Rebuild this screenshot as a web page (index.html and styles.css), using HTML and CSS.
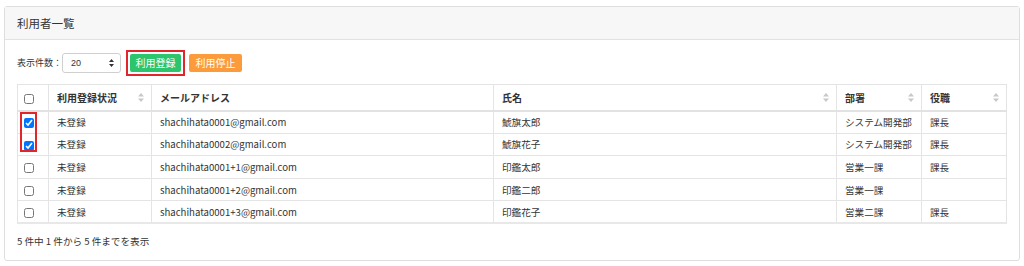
FILE: index.html
```html
<!DOCTYPE html>
<html lang="ja">
<head>
<meta charset="utf-8">
<title>利用者一覧</title>
<link rel="stylesheet" href="styles.css">
</head>
<body>
<div class="card">
  <div class="card-header">利用者一覧</div>
  <div class="card-body">
    <div class="toolbar">
      <label class="per-page">表示件数：</label>
      <div class="select">
        <span>20</span>
        <svg class="updown" width="5" height="8" viewBox="0 0 5 8"><path d="M2.5 0 L5 3 L0 3 Z M2.5 8 L5 5 L0 5 Z" fill="#333"/></svg>
      </div>
      <span class="mark-btn"><button class="btn btn-green">利用登録</button></span>
      <button class="btn btn-orange">利用停止</button>
    </div>
    <div class="table-wrap">
      <table class="grid">
        <colgroup>
          <col class="c-chk"><col class="c-status"><col class="c-mail"><col class="c-name"><col class="c-dept"><col class="c-role">
        </colgroup>
        <thead>
          <tr>
            <th class="chk"><input type="checkbox"></th>
            <th><div class="th-in"><span>利用登録状況</span><svg class="sort" width="6" height="9" viewBox="0 0 6 9"><path d="M3 0 L6 3.5 L0 3.5 Z M3 9 L6 5.5 L0 5.5 Z" fill="#c8c8c8"/></svg></div></th>
            <th><div class="th-in"><span>メールアドレス</span></div></th>
            <th><div class="th-in"><span>氏名</span><svg class="sort" width="6" height="9" viewBox="0 0 6 9"><path d="M3 0 L6 3.5 L0 3.5 Z M3 9 L6 5.5 L0 5.5 Z" fill="#c8c8c8"/></svg></div></th>
            <th><div class="th-in"><span>部署</span><svg class="sort" width="6" height="9" viewBox="0 0 6 9"><path d="M3 0 L6 3.5 L0 3.5 Z M3 9 L6 5.5 L0 5.5 Z" fill="#c8c8c8"/></svg></div></th>
            <th><div class="th-in"><span>役職</span><svg class="sort" width="6" height="9" viewBox="0 0 6 9"><path d="M3 0 L6 3.5 L0 3.5 Z M3 9 L6 5.5 L0 5.5 Z" fill="#c8c8c8"/></svg></div></th>
          </tr>
        </thead>
        <tbody>
          <tr><td class="chk"><input type="checkbox" checked></td><td>未登録</td><td>shachihata0001@gmail.com</td><td>鯱旗太郎</td><td>システム開発部</td><td>課長</td></tr>
          <tr><td class="chk"><input type="checkbox" checked></td><td>未登録</td><td>shachihata0002@gmail.com</td><td>鯱旗花子</td><td>システム開発部</td><td>課長</td></tr>
          <tr><td class="chk"><input type="checkbox"></td><td>未登録</td><td>shachihata0001+1@gmail.com</td><td>印鑑太郎</td><td>営業一課</td><td>課長</td></tr>
          <tr><td class="chk"><input type="checkbox"></td><td>未登録</td><td>shachihata0001+2@gmail.com</td><td>印鑑二郎</td><td>営業一課</td><td></td></tr>
          <tr><td class="chk"><input type="checkbox"></td><td>未登録</td><td>shachihata0001+3@gmail.com</td><td>印鑑花子</td><td>営業二課</td><td>課長</td></tr>
        </tbody>
      </table>
      <div class="mark-checks"></div>
    </div>
    <div class="summary">5 件中 1 件から 5 件までを表示</div>
  </div>
</div>
</body>
</html>
```

FILE: styles.css
```css
* { box-sizing: border-box; }
html, body { margin: 0; padding: 0; background: #fff; }
body {
  font-family: "Noto Sans CJK JP", "Noto Sans", sans-serif;
  color: #333;
  font-size: 9.6px;
}
.card {
  margin: 6px 4px 0 4px;
  border: 1px solid #dedede;
  border-radius: 3px;
  height: 255px;
}
.card-header {
  height: 33px;
  background: #f7f7f7;
  border-bottom: 1px solid #e2e2e2;
  padding: 0 12px;
  display: flex;
  align-items: center;
  font-size: 11.5px;
  color: #333;
}
.card-body {
  padding: 9px 12px 0 12px;
}
.toolbar {
  display: flex;
  align-items: center;
  height: 27px;
}
.per-page { font-size: 9px; }
.select {
  width: 59px;
  height: 20px;
  border: 1px solid #cfcfcf;
  border-radius: 3px;
  display: flex;
  align-items: center;
  justify-content: space-between;
  padding: 0 6px 0 8px;
  font-family: "Liberation Sans", sans-serif;
  font-size: 9px;
}
.mark-btn {
  display: flex;
  margin-left: 5px;
  border: 2px solid #e0262a;
  padding: 2px;
}
.btn {
  height: 18px;
  border: none;
  border-radius: 2px;
  color: #fff;
  font-family: "Noto Sans CJK JP", sans-serif;
  font-size: 10px;
  padding: 0 4px;
  line-height: 18px;
}
.btn-green {
  background: #2cc46c;
  width: 51px;
}
.btn-orange {
  background: #fc9b3b;
  margin-left: 4px;
  width: 53px;
}
.table-wrap {
  position: relative;
  margin-top: 8px;
}
.grid {
  width: 989px;
  table-layout: fixed;
  border-collapse: collapse;
  border: 1px solid #e4e4e4;
  border-bottom: 2px solid #e8e8e8;
}
.c-chk { width: 31px; }
.c-status { width: 103px; }
.c-mail { width: 342px; }
.c-name { width: 343px; }
.c-dept { width: 85px; }
.c-role { width: 85px; }
.grid th, .grid td {
  border: 1px solid #e4e4e4;
  padding: 0 8px;
  text-align: left;
  white-space: nowrap;
}
.grid th {
  height: 26px;
  font-weight: bold;
  font-size: 10px;
  border-bottom: 2px solid #e2e2e2;
}
.grid td {
  height: 22.6px;
  font-size: 9.6px;
}
.grid .chk { padding: 0 0 0 6px; }
.grid input[type="checkbox"] {
  width: 10px;
  height: 10px;
  margin: 0;
  vertical-align: middle;
}
.th-in {
  display: flex;
  align-items: center;
  justify-content: space-between;
}
.sort { flex: none; margin-right: -1px; }
.mark-checks {
  position: absolute;
  left: 3px;
  top: 28px;
  width: 17px;
  height: 40px;
  border: 2px solid #e0262a;
}
.summary {
  margin-top: 10px;
  font-size: 9.6px;
  line-height: 14px;
}
```
